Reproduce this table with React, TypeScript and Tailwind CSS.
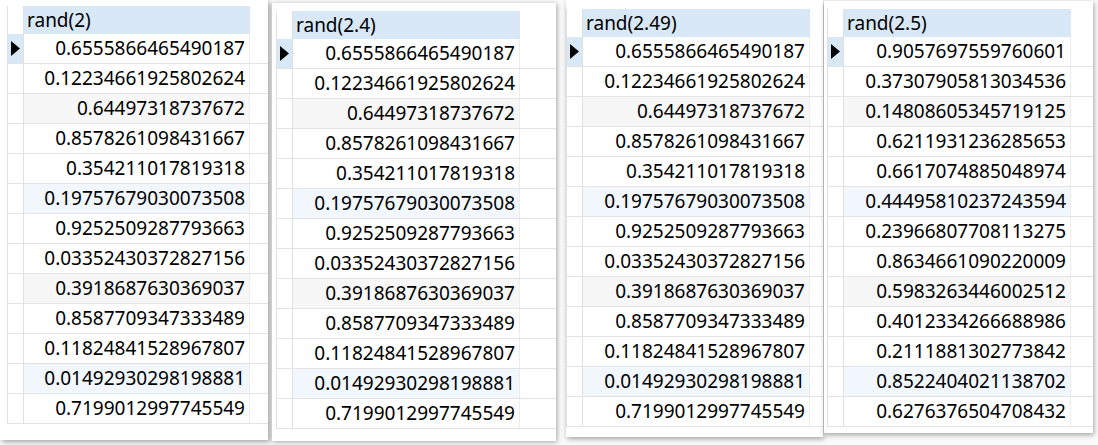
const SAME = [
  "0.6555866465490187",
  "0.12234661925802624",
  "0.64497318737672",
  "0.8578261098431667",
  "0.354211017819318",
  "0.19757679030073508",
  "0.9252509287793663",
  "0.03352430372827156",
  "0.3918687630369037",
  "0.8587709347333489",
  "0.11824841528967807",
  "0.01492930298198881",
  "0.7199012997745549",
];

const OTHER = [
  "0.9057697559760601",
  "0.37307905813034536",
  "0.14808605345719125",
  "0.6211931236285653",
  "0.6617074885048974",
  "0.44495810237243594",
  "0.23966807708113275",
  "0.8634661090220009",
  "0.5983263446002512",
  "0.4012334266688986",
  "0.2111881302773842",
  "0.8522404021138702",
  "0.6276376504708432",
];

// rows 3/9 grey, 6/12 pale blue (hover leftovers in the source grid)
function rowBg(i: number) {
  if (i === 2 || i === 8) return "bg-[#f7f7f7]";
  if (i === 5 || i === 11) return "bg-[#f2f7fd]";
  return "bg-white";
}

function Arrow() {
  return (
    <svg width="9" height="15" viewBox="0 0 9 15">
      <path d="M0 0L9 7.5L0 15Z" fill="#000" />
    </svg>
  );
}

function Grid({ title, values, colW }: { title: string; values: string[]; colW: string }) {
  return (
    <div className="flex flex-col border-l border-[#e0e0e0]">
      {/* Header */}
      <div className="flex h-[28px]">
        <div className="w-[16px] border-r border-[#e0e0e0] bg-white" />
        <div className={`${colW} flex items-center bg-[#d9e8f7] pl-[3px]`}>{title}</div>
      </div>
      {values.map((v, i) => (
        <div key={i} className="flex h-[30px] border-b border-[#e3e3e3]">
          <div
            className={`flex w-[16px] items-center justify-center border-r border-[#e0e0e0] ${
              i === 0 ? "bg-[#d9e8f7]" : "bg-white"
            }`}
          >
            {i === 0 && <Arrow />}
          </div>
          <div
            className={`${colW} flex items-center justify-end border-r border-[#ececec] pr-[4px] ${rowBg(i)}`}
          >
            {v}
          </div>
        </div>
      ))}
    </div>
  );
}

export default function App() {
  return (
    <div
      className="flex h-[445px] w-[1098px] items-start overflow-hidden bg-[#fafafa] text-[19px] leading-none text-black"
      style={{ fontFamily: '"Noto Sans", "Open Sans", sans-serif' }}
    >
      <div className="h-[440px] w-[268px] shrink-0 bg-white pl-[7px] pt-[6px] shadow-[2px_2px_5px_rgba(0,0,0,0.35)]">
        <Grid title="rand(2)" values={SAME} colW="w-[226px]" />
      </div>
      <div className="ml-[4px] mt-[3px] h-[438px] w-[284px] shrink-0 bg-white pl-[4px] pt-[8px] shadow-[1px_1px_5px_rgba(0,0,0,0.35)]">
        <Grid title="rand(2.4)" values={SAME} colW="w-[227px]" />
      </div>
      <div className="ml-[10px] h-[437px] w-[257px] shrink-0 bg-white pt-[9px] shadow-[1px_2px_5px_rgba(0,0,0,0.35)]">
        <Grid title="rand(2.49)" values={SAME} colW="w-[227px]" />
      </div>
      <div className="ml-[1px] mt-[1px] h-[432px] w-[269px] shrink-0 bg-white pl-[3px] pt-[8px] shadow-[1px_2px_5px_rgba(0,0,0,0.35)]">
        <Grid title="rand(2.5)" values={OTHER} colW="w-[227px]" />
      </div>
    </div>
  );
}
